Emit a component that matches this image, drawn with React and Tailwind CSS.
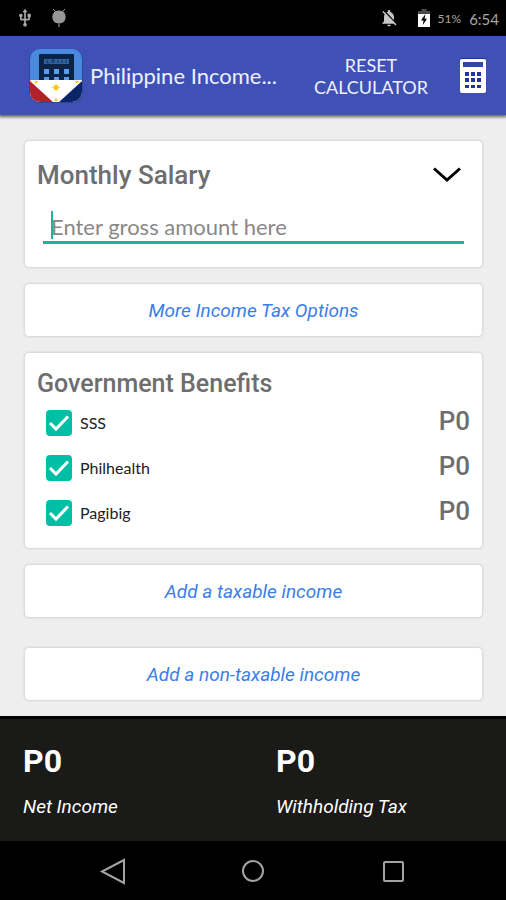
import React, { useState } from 'react';
import { MdUsb, MdNotificationsOff } from 'react-icons/md';

const BENEFITS = [
    { id: 'sss', label: 'SSS' },
    { id: 'philhealth', label: 'Philhealth' },
    { id: 'pagibig', label: 'Pagibig' }
];

const TOTALS = ['Net Income', 'Withholding Tax'];

function DroidIcon() {
    return (
        <svg className="w-4 h-5" viewBox="0 0 16 20" fill="#969696" aria-hidden="true">
            <path d="M2 1l3 3M14 1l-3 3" stroke="#969696" strokeWidth="1" />
            <path d="M8 2.500c4.200 0 6.700 2.800 6.700 6.500S12 15.500 8 15.500 1.300 12.700 1.300 9 3.800 2.500 8 2.500z" />
            <path d="M7 15h2v4H7z" fill="#555" />
        </svg>
    );
}

function BatteryIcon() {
    return (
        <svg className="w-3 h-5" viewBox="0 0 12 20" aria-hidden="true">
            <path d="M3.500 1h5v2H12v3H0V3h3.500z" fill="#4a4a4a" />
            <path d="M0 6h12v13H0z" fill="#fff" />
            <path d="M7.400 6L3 12.600h2.500L4.800 17 9 10.800H6.600z" fill="#000" />
        </svg>
    );
}

function AppLogo() {
    return (
        <svg className="w-[54px] h-[54px] shrink-0" viewBox="0 0 54 54" role="img" aria-label="App logo">
            <defs>
                <clipPath id="logo-shape">
                    <rect x="1" y="0" width="52" height="53" rx="10" />
                </clipPath>
            </defs>
            <rect x="0" y="1" width="54" height="53" rx="11" fill="#2c3c8c" opacity="0.6" />
            <g clipPath="url(#logo-shape)">
                <rect width="54" height="54" fill="#4a8ade" />
                <rect x="10" y="5" width="35" height="30" rx="1" fill="#0a2346" />
                <rect x="15" y="10" width="25" height="5" fill="#2f639f" />
                <path d="M18 11v3h2M23 14v-3h2v3M29 11v3M33 11v3M37 11v3" fill="none" stroke="#12315c" strokeWidth="1" />
                <path d="M15 20h5v5h-5zM25 20h5v5h-5zM35 20h5v5h-5zM15 28h5v3h-5zM25 28h5v3h-5zM35 28h5v3h-5z" fill="#5c9bea" />
                <rect y="31" width="54" height="23" fill="#fff" />
                <path d="M0 31l25 23H0z" fill="#b3202c" />
                <path d="M54 31L29 54h25z" fill="#0b2569" />
                <path d="M27 34v9M22.500 38.500h9M24 35.500l6 6M30 35.500l-6 6" stroke="#f9dc6a" strokeWidth="1" />
                <circle cx="27" cy="38.500" r="2.500" fill="#f7c613" />
                <path d="M5 32h4l-2 3zM46 32h4l-2 3zM25 52h4l-2-3z" fill="#f7c613" />
            </g>
        </svg>
    );
}

function CalculatorIcon() {
    return (
        <svg className="w-[26px] h-9" viewBox="0 0 26 36" aria-hidden="true">
            <path d="M1 0h24v2H1z" fill="#1d2f9c" />
            <rect y="1" width="26" height="34" rx="2" fill="#fff" />
            <path d="M3 4h20v5H3z" fill="#3046a8" />
            <path
                d="M5 14h4v4H5zM11 14h4v4h-4zM17 14h4v4h-4zM5 20h4v4H5zM11 20h4v4h-4zM17 20h4v4h-4zM5 27h4v3H5zM11 27h4v3h-4zM17 27h4v3h-4z"
                fill="#2334a0"
            />
        </svg>
    );
}

function Card({ children, className = '' }) {
    return (
        <section className={`rounded-[5px] border border-[#dcdcdc] bg-white shadow-[0_0_1px_1px_#e4e4e4] ${className}`}>
            {children}
        </section>
    );
}

function LinkButton({ children, className = '' }) {
    return (
        <button
            type="button"
            className={`h-[54px] w-full shrink-0 rounded-[5px] border border-[#dcdcdc] bg-white pt-[2px] text-[19px] text-[#3b7de8] italic shadow-[0_0_1px_1px_#e4e4e4] ${className}`}
        >
            {children}
        </button>
    );
}

function BenefitRow({ id, label, checked, onToggle }) {
    return (
        <div className="flex h-[45px] items-center justify-between">
            <label htmlFor={id} className="flex items-center gap-2 font-[Lato] text-base text-[#222]">
                <span className="grid">
                    <input
                        id={id}
                        type="checkbox"
                        checked={checked}
                        onChange={onToggle}
                        className="peer col-start-1 row-start-1 size-[26px] appearance-none rounded-sm border-2 border-[#757575] checked:border-[#00bfa5] checked:bg-[#00bfa5]"
                    />
                    <svg
                        className="pointer-events-none invisible col-start-1 row-start-1 size-[26px] peer-checked:visible"
                        viewBox="0 0 26 26"
                        fill="none"
                        stroke="#fff"
                        strokeWidth="3"
                        aria-hidden="true"
                    >
                        <path d="M4 13l6 6L22 6.500" />
                    </svg>
                </span>
                {label}
            </label>
            <span className="pb-1 text-[26px] leading-8 font-medium text-[#6e6e6e]">P0</span>
        </div>
    );
}

export default function App() {
    const [salary, setSalary] = useState('');
    const [enrolled, setEnrolled] = useState({ sss: true, philhealth: true, pagibig: true });

    const toggle = (id) => setEnrolled(prev => ({ ...prev, [id]: !prev[id] }));

    return (
        <div className="flex min-h-screen flex-col bg-[#eeeeee] font-[Roboto,sans-serif]">
            <div className="flex h-9 items-center bg-black px-[7px] font-[Lato] text-[#a8a8a8]">
                <MdUsb className="ml-2 size-5" />
                <span className="ml-4"><DroidIcon /></span>
                <MdNotificationsOff className="ml-auto size-5 text-[#c8c8c8]" />
                <span className="ml-[19px]"><BatteryIcon /></span>
                <span className="ml-2 pt-[2px] text-xs">51%</span>
                <span className="ml-2 pt-[2px] text-[15px]">6:54</span>
            </div>

            <header className="z-10 flex h-[79px] items-center bg-[#3f51b5] pr-5 pl-[29px] font-[Lato] text-[#eef0ff] shadow-[0_1px_3px_1px_rgba(0,0,0,0.6)]">
                <AppLogo />
                <h1 className="ml-[7px] flex-1 text-[22px] whitespace-nowrap">Philippine Income...</h1>
                <button type="button" className="w-[130px] text-center text-lg leading-[22px]">RESET CALCULATOR</button>
                <button type="button" aria-label="Calculator" className="ml-6">
                    <CalculatorIcon />
                </button>
            </header>

            <main className="flex flex-1 flex-col pt-[25px] pr-[23px] pb-[14px] pl-6">
                <Card className="h-[128px] pt-[18px] pr-[13px] pl-3">
                    <div className="flex items-center justify-between pr-2">
                        <label htmlFor="salary" className="text-[26px] leading-8 font-medium text-[#6e6e6e]">Monthly Salary</label>
                        <button type="button" aria-label="Choose period">
                            <svg className="h-4 w-7" viewBox="0 0 28 16" fill="none" stroke="#000" strokeWidth="3" aria-hidden="true">
                                <path d="M1 1.500l13 11.500L27 1.500" />
                            </svg>
                        </button>
                    </div>
                    <div className="relative mt-4 mr-[5px] ml-[6px]">
                        <input
                            id="salary"
                            inputMode="decimal"
                            value={salary}
                            onChange={(e) => setSalary(e.target.value)}
                            placeholder="Enter gross amount here"
                            className="block h-[37px] w-full border-b-[3px] border-[#1bb59c] px-2 pt-1 font-[Lato] text-[22px] text-[#333] outline-none placeholder:text-[#888]"
                        />
                        {!salary && <span className="absolute top-1 left-2 h-7 w-[2px] bg-[#1bb59c]" />}
                    </div>
                </Card>

                <LinkButton className="mt-[15px]">More Income Tax Options</LinkButton>

                <Card className="mt-[15px] h-[197px] pt-[15px] pr-3 pl-3">
                    <h2 className="text-[25px] leading-8 font-medium text-[#6e6e6e]">Government Benefits</h2>
                    <div className="pl-[9px]">
                        {BENEFITS.map(({ id, label }) => (
                            <BenefitRow key={id} id={id} label={label} checked={enrolled[id]} onToggle={() => toggle(id)} />
                        ))}
                    </div>
                </Card>

                <LinkButton className="mt-[15px]">Add a taxable income</LinkButton>
                <LinkButton className="mt-[29px]">Add a non-taxable income</LinkButton>
            </main>

            <footer className="grid h-[125px] grid-cols-2 border-t-[3px] border-black bg-[#1a1a18] pt-6 text-white">
                {TOTALS.map(label => (
                    <div key={label} className="pl-[23px]">
                        <p className="text-[32px] leading-9 font-bold">P0</p>
                        <p className="mt-4 text-[19px] leading-6 italic">{label}</p>
                    </div>
                ))}
            </footer>

            <nav className="flex h-[59px] items-center justify-around bg-black px-[43px]">
                <button type="button" aria-label="Back">
                    <svg className="size-7" viewBox="0 0 28 28" fill="none" stroke="#a3a3a3" strokeWidth="2">
                        <path d="M25 3v23L3 14.500z" />
                    </svg>
                </button>
                <button type="button" aria-label="Home">
                    <svg className="size-7" viewBox="0 0 28 28" fill="none" stroke="#a3a3a3" strokeWidth="2">
                        <circle cx="14" cy="14" r="10" />
                    </svg>
                </button>
                <button type="button" aria-label="Recent apps">
                    <svg className="size-7" viewBox="0 0 28 28" fill="none" stroke="#a3a3a3" strokeWidth="2">
                        <rect x="5" y="5" width="19" height="19" rx="1" />
                    </svg>
                </button>
            </nav>
        </div>
    );
}
